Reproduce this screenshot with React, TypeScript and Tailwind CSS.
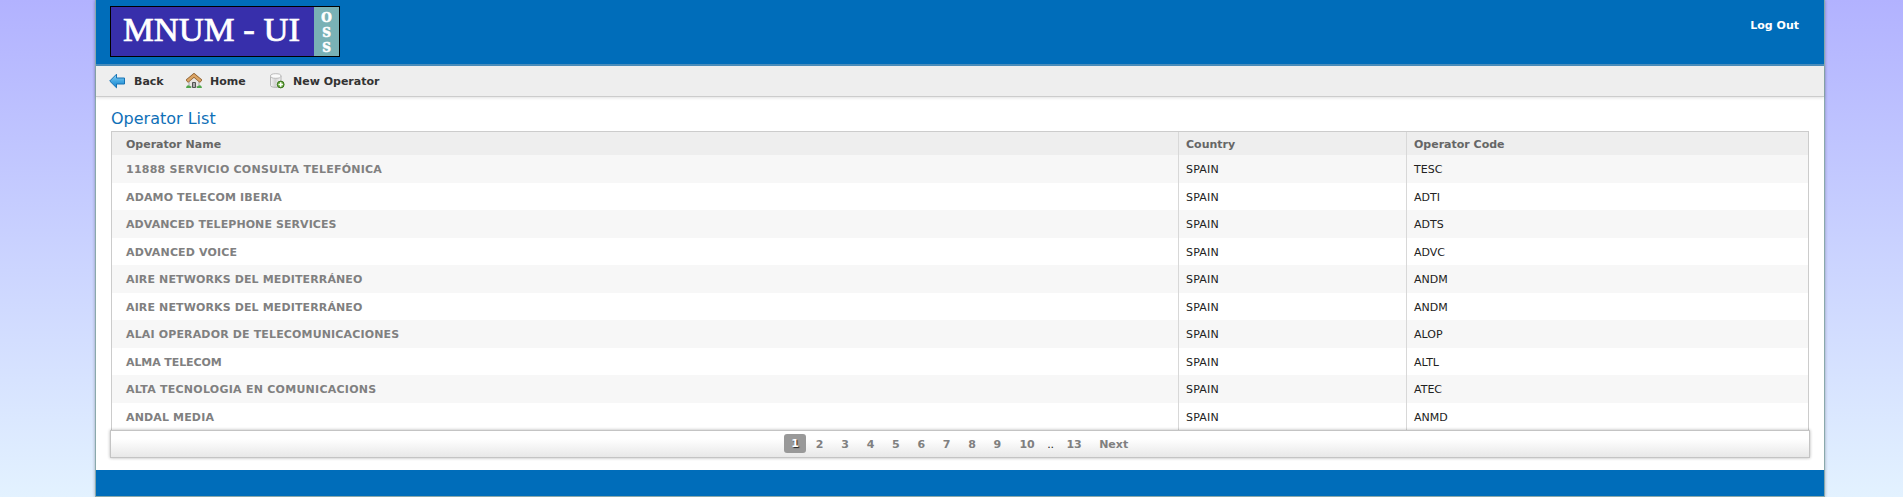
import React from "react";

const rows: [string, string, string][] = [
  ["11888 SERVICIO CONSULTA TELEFÓNICA", "TESC", "tracking-[0.24px]"],
  ["ADAMO TELECOM IBERIA", "ADTI", "tracking-[0.14px]"],
  ["ADVANCED TELEPHONE SERVICES", "ADTS", "tracking-[0.08px]"],
  ["ADVANCED VOICE", "ADVC", "tracking-[0.15px]"],
  ["AIRE NETWORKS DEL MEDITERRÁNEO", "ANDM", "tracking-[0.13px]"],
  ["AIRE NETWORKS DEL MEDITERRÁNEO", "ANDM", "tracking-[0.13px]"],
  ["ALAI OPERADOR DE TELECOMUNICACIONES", "ALOP", "tracking-[0.15px]"],
  ["ALMA TELECOM", "ALTL", "tracking-[-0.1px]"],
  ["ALTA TECNOLOGIA EN COMUNICACIONS", "ATEC", "tracking-[0.26px]"],
  ["ANDAL MEDIA", "ANMD", "tracking-[0.15px]"],
];

const pages = ["2", "3", "4", "5", "6", "7", "8", "9"];

function BackIcon() {
  return (
    <svg width="16" height="16" viewBox="0 0 16 16">
      <defs>
        <linearGradient id="arrow" x1="0" y1="0" x2="0" y2="1">
          <stop offset="0" stopColor="#8fd3f5" />
          <stop offset="0.55" stopColor="#3fa4e0" />
          <stop offset="1" stopColor="#1583cc" />
        </linearGradient>
      </defs>
      <path d="M.7 8 7.500 1.200V5H15.500V11H7.500V14.800Z" fill="url(#arrow)" stroke="#1672b4" strokeWidth="1" />
    </svg>
  );
}

function HomeIcon() {
  return (
    <svg width="16" height="16" viewBox="0 0 16 16">
      <path d="M3 8 8 3.500 13 8V14H3Z" fill="#e9e6e2" stroke="#8d8a86" strokeWidth=".7" />
      <path d="M.8 8.400 8 2.300 15.200 8.400" fill="none" stroke="#8a5a28" strokeWidth="3.800" />
      <path d="M1.300 8 8 2.300 14.700 8" fill="none" stroke="#dba566" strokeWidth="2.400" />
      <path d="M6.500 14.500V9.500H9.500V14.500Z" fill="#a9a9a9" stroke="#555" strokeWidth="1" />
      <path d="M0 15Q.5 11.500 3 12.500L5 13.500V15ZM16 15Q15.500 11.500 13 12.500L11 13.500V15Z" fill="#4fa64c" />
    </svg>
  );
}

function DatabaseAddIcon() {
  return (
    <svg width="16" height="16" viewBox="0 0 16 16">
      <defs>
        <linearGradient id="cylinder">
          <stop offset="0" stopColor="#f5f5f5" />
          <stop offset=".45" stopColor="#d2d2d2" />
          <stop offset="1" stopColor="#f3f3f3" />
        </linearGradient>
      </defs>
      <path d="M1.500 3V12.500C1.500 15 12 15 12 12.500V3Z" fill="url(#cylinder)" stroke="#b5b5b5" />
      <ellipse cx="6.750" cy="3" rx="5.250" ry="2.300" fill="#fafafa" stroke="#bbb" />
      <circle cx="11.700" cy="11.500" r="3.400" fill="#66a83b" stroke="#39731c" />
      <path d="M11.700 9.300V13.700M9.500 11.500H13.900" stroke="#fff" strokeWidth="1.500" />
    </svg>
  );
}

export default function App() {
  return (
    <div className="h-[497px] overflow-hidden bg-linear-to-b from-[#b2b2ff] to-[#e3f2ff] pl-[95px] font-['DejaVu_Sans',sans-serif] text-[11px] text-[#222]">
      <div className="flex h-[497px] w-[1730px] flex-col border border-t-0 border-[#8aa9ac] bg-white shadow-[0_0_3px_rgba(0,0,0,0.3)]">
        <header className="flex h-[66px] shrink-0 items-start justify-between border-b-2 border-[#4c8ebc] bg-[#006dba] pt-[6px] pr-[25px] pl-[14px]">
          <div className="flex h-[51px] w-[230px] border border-black bg-[#372fab] text-white">
            <div className="flex w-[203px] items-center justify-center pb-[3px] font-['Liberation_Serif',serif] text-[33px] leading-none">
              <svg width="180" height="40">
                <text x="0" y="31" textLength="177" lengthAdjust="spacingAndGlyphs" fill="white" stroke="white" strokeWidth=".7">MNUM - UI</text>
              </svg>
            </div>
            <div className="flex w-[25px] flex-col items-center justify-center bg-[#79b1b5] pt-[3px] font-['DejaVu_Serif',serif] text-[12px] leading-[15px] font-bold [-webkit-text-stroke:0.6px_white]">
              <span>O</span><span>S</span><span>S</span>
            </div>
          </div>
          <a className="pt-[13px] leading-[14px] font-bold text-white">Log Out</a>
        </header>
        <nav className="flex h-[31px] shrink-0 items-center border-b border-[#ccc] bg-[#eee] pl-[13px] font-bold text-[#333] shadow-[0_1px_3px_rgba(0,0,0,0.12)]">
          <a className="flex w-[77px] items-center gap-[9px]"><BackIcon /><span className="pt-[2px]">Back</span></a>
          <a className="flex w-[83px] items-center gap-[8px]"><HomeIcon /><span className="pt-[2px]">Home</span></a>
          <a className="flex items-center gap-[8px]"><DatabaseAddIcon /><span className="pt-[2px]">New Operator</span></a>
        </nav>
        <main className="h-[373px] shrink-0 px-[15px] pt-[11px]">
          <h1 className="h-[23px] text-[16px] leading-[22px] text-[#0f70b7]">Operator List</h1>
          <table className="w-[1698px] table-fixed border-separate border-spacing-0 border border-b-0 border-[#ccc] text-left">
            <colgroup><col className="w-[1066px]" /><col className="w-[228px]" /><col /></colgroup>
            <thead>
              <tr className="h-[23px] bg-[#eee] text-[#666]">
                <th className="p-0 pt-[3px] pl-[14px]">Operator Name</th>
                <th className="border-l border-[#d8d8d8] p-0 pt-[3px] pl-[7px]">Country</th>
                <th className="border-l border-[#d8d8d8] p-0 pt-[3px] pl-[7px]">Operator Code</th>
              </tr>
            </thead>
            <tbody>
              {rows.map(([name, code, tracking], i) => (
                <tr key={i} className="group h-[27px] odd:h-[28px] odd:bg-[#f7f7f7]">
                  <td className={`p-0 pt-[2px] pl-[14px] font-bold text-[#808080] group-even:pt-[3px] ${tracking}`}>{name}</td>
                  <td className="border-l border-[#d8d8d8] p-0 pt-[2px] pl-[7px] tracking-[0.2px] group-even:pt-[3px]">SPAIN</td>
                  <td className="border-l border-[#d8d8d8] p-0 pt-[2px] pl-[7px] group-even:pt-[3px]">{code}</td>
                </tr>
              ))}
            </tbody>
          </table>
          <div className="-mx-px flex h-[28px] w-[1700px] items-center border border-[#c4c4c4] bg-linear-to-b from-white from-30% to-[#e8e8e8] pl-[673px] font-bold text-[#808080] shadow-[0_0_3px_rgba(0,0,0,0.3)]">
            <span className="mb-px flex h-[19px] w-[22px] items-center justify-center rounded-[3px] bg-[#999] pt-px text-white [text-shadow:1px_1px_1px_#222]">1</span>
            <div className="flex pt-[2px] pl-px">
              {pages.map((p) => <a key={p} className="w-[25.4px] text-center">{p}</a>)}
              <a className="w-[34px] text-center">10</a>
              <span className="w-[13px] text-center font-normal text-[#222]">..</span>
              <a className="w-[34px] text-center">13</a>
              <a className="pl-[8px]">Next</a>
            </div>
          </div>
        </main>
        <footer className="h-[26px] shrink-0 bg-[#006dba]" />
      </div>
    </div>
  );
}
